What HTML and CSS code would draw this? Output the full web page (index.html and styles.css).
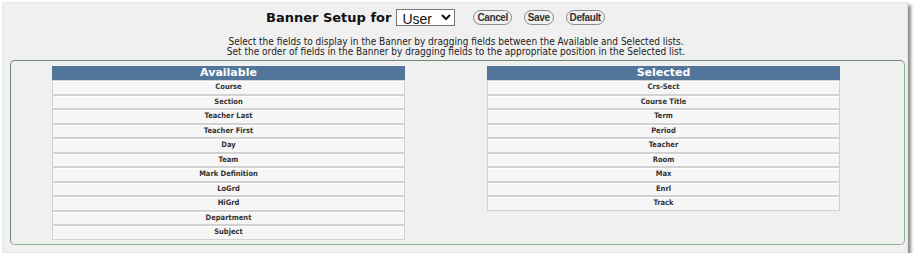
FILE: index.html
```html
<!DOCTYPE html>
<html lang="en">
<head>
  <meta charset="UTF-8" />
  <title>Banner Setup</title>
  <link rel="stylesheet" href="styles.css">
</head>
<body>

  <div class="frame">
    <div class="topbar">
      <h1 class="title">Banner Setup for</h1>
      <select class="scope">
        <option>User</option>
        <option>Group</option>
      </select>
      <div class="actions">
        <button type="button">Cancel</button>
        <button type="button">Save</button>
        <button type="button">Default</button>
      </div>
    </div>

    <p class="help">
      Select the fields to display in the Banner by dragging fields between the Available and Selected lists.<br>
      Set the order of fields in the Banner by dragging fields to the appropriate position in the Selected list.
    </p>

    <fieldset class="lists">
      <div class="list">
        <div class="list-head">Available</div>
        <div class="item">Course</div>
        <div class="item">Section</div>
        <div class="item">Teacher Last</div>
        <div class="item">Teacher First</div>
        <div class="item">Day</div>
        <div class="item">Team</div>
        <div class="item">Mark Definition</div>
        <div class="item">LoGrd</div>
        <div class="item">HiGrd</div>
        <div class="item">Department</div>
        <div class="item">Subject</div>
      </div>

      <div class="list">
        <div class="list-head">Selected</div>
        <div class="item">Crs-Sect</div>
        <div class="item">Course Title</div>
        <div class="item">Term</div>
        <div class="item">Period</div>
        <div class="item">Teacher</div>
        <div class="item">Room</div>
        <div class="item">Max</div>
        <div class="item">Enrl</div>
        <div class="item">Track</div>
      </div>
    </fieldset>
  </div>

</body>
</html>
```

FILE: styles.css
```css
* { margin: 0; padding: 0; box-sizing: border-box; }

body {
  background: #fff;
  font-family: 'DejaVu Sans Condensed', 'DejaVu Sans', sans-serif;
  color: #222;
}

.frame {
  width: 906px;
  height: 251px;
  margin: 2px 0 0 2px;
  background: #f0f0f0;
  border: 1px solid #e6e6e6;
  box-shadow: 3px 3px 3px rgba(0, 0, 0, 0.45);
  padding-top: 6px;
}

.topbar {
  display: flex;
  align-items: center;
  padding-left: 263px;
  height: 17px;
}

.title {
  font-family: 'DejaVu Sans', sans-serif;
  font-size: 13px;
  font-weight: bold;
  color: #111;
  margin-right: 5px;
}

.scope {
  width: 59px;
  height: 17px;
  font-family: 'Liberation Sans', Arial, sans-serif;
  font-size: 14px;
  border: 1px solid #767676;
  background: #fff;
  color: #111;
  padding-left: 1px;
}

.actions {
  display: flex;
  gap: 12px;
  margin-left: 18px;
}

.actions button {
  font-family: 'Liberation Sans Narrow', 'Liberation Sans', sans-serif;
  font-weight: bold;
  font-size: 10px;
  letter-spacing: -0.4px;
  color: #333;
  background: #f0f0f0;
  border: 1px solid #8a8a8a;
  border-radius: 8px;
  height: 15px;
  padding: 0 3px;
}

.help {
  text-align: center;
  font-size: 10px;
  line-height: 10px;
  color: #222;
  margin-top: 11px;
  margin-left: 2px;
}

.lists {
  display: flex;
  gap: 82px;
  margin: 3px 0 0 7px;
  width: 895px;
  height: 185px;
  border: 1px solid #6f8a6f;
  border-right-color: #8fb08f;
  border-bottom-color: #8fb08f;
  border-radius: 5px;
  padding: 5px 0 0 41px;
}

.list {
  width: 353px;
  display: flex;
  flex-direction: column;
}

.list-head {
  background: #51769a;
  color: #fff;
  font-family: 'DejaVu Sans', sans-serif;
  font-weight: bold;
  font-size: 11px;
  height: 14px;
  line-height: 14px;
  text-align: center;
}

.item {
  height: 14.5px;
  line-height: 12.5px;
  border: 1px solid #d2d2d2;
  background: #f6f6f6;
  box-shadow: inset 0 1px 0 #fff;
  text-align: center;
  font-size: 7.5px;
  color: #333;
  font-weight: 600;
}
```
